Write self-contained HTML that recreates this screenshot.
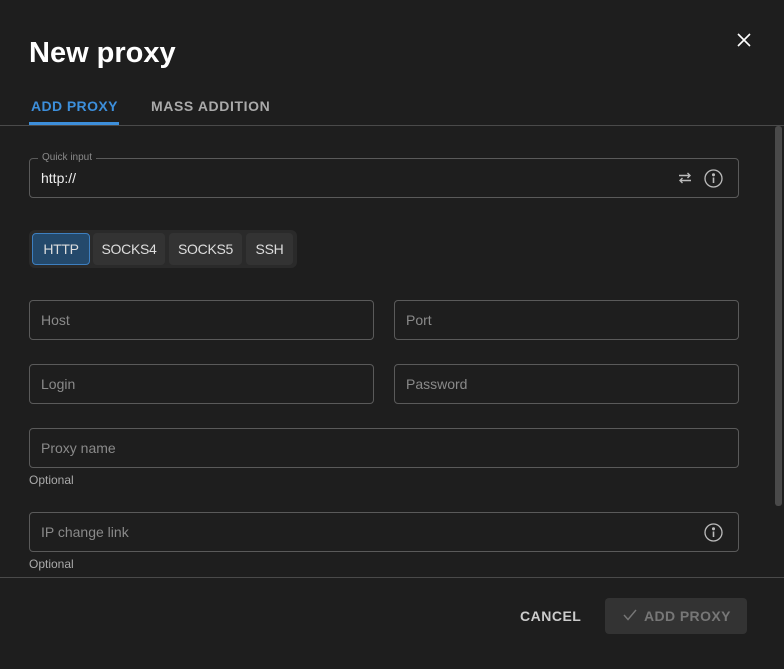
<!DOCTYPE html><html><head><style>
body{margin:0;width:784px;height:669px;background:#1e1e1e;font-family:"Liberation Sans",sans-serif;position:relative;overflow:hidden;color:#ddd}
.a{position:absolute}
.f{position:absolute;border:1px solid #5a5a5a;border-radius:4px;box-sizing:border-box;height:40px}
.ph{position:absolute;left:11px;top:11px;font-size:14px;color:#8a8a8a}
.opt{position:absolute;font-size:12px;color:#aaa}
.b{position:absolute;top:3px;height:32px;border-radius:4px;background:#333;font-size:14px;color:#ddd;text-align:center;line-height:32px;letter-spacing:-0.3px}
</style></head><body>
<div class="a" style="left:29px;top:37px;font-size:29px;font-weight:bold;color:#fff">New proxy</div>
<svg class="a" style="left:737px;top:33px" width="14" height="14"><path d="M1 1L13 13M13 1L1 13" stroke="#fff" stroke-width="1.6"/></svg>
<div class="a" style="left:31px;top:98px;font-size:14px;font-weight:bold;letter-spacing:0.4px;color:#3d8fdb">ADD PROXY</div>
<div class="a" style="left:29px;top:122px;width:90px;height:3px;background:#3d8fdb"></div>
<div class="a" style="left:151px;top:98px;font-size:14px;font-weight:bold;letter-spacing:0.6px;color:#aaa">MASS ADDITION</div>
<div class="a" style="left:0;top:125px;width:784px;height:1px;background:#4a4a4a"></div>
<div class="a" style="left:775px;top:126px;width:7px;height:380px;background:#4a4a4a;border-radius:3px"></div>
<div class="f" style="left:29px;top:158px;width:710px"><div class="a" style="left:8px;top:-7px;padding:0 4px;background:#1e1e1e;font-size:10px;color:#8a8a8a">Quick input</div><div class="ph" style="color:#eee">http://</div>
<svg class="a" style="left:648px;top:12px" width="14" height="14" fill="none" stroke="#bbb" stroke-width="1.4"><path d="M1 4.5H12M9.5 2L12 4.5L9.5 7M13 9.5H2M4.5 7L2 9.5L4.5 12"/></svg>
<svg class="a" style="left:674px;top:10px" width="19" height="19" fill="none" stroke="#bbb" stroke-width="1.3"><circle cx="9.5" cy="9.5" r="8.5"/><path d="M9.5 8.5V14" stroke-width="1.6"/><circle cx="9.5" cy="5.8" r=".9" fill="#bbb"/></svg></div>
<div class="a" style="left:29px;top:230px;width:268px;height:38px;background:#2a2a2a;border-radius:6px">
<div class="b" style="left:3px;width:58px;background:#24496b;border:1px solid #3d7fc0;box-sizing:border-box;line-height:30px">HTTP</div>
<div class="b" style="left:64px;width:72px">SOCKS4</div>
<div class="b" style="left:140px;width:73px">SOCKS5</div>
<div class="b" style="left:217px;width:47px">SSH</div></div>
<div class="f" style="left:29px;top:300px;width:345px"><div class="ph">Host</div></div>
<div class="f" style="left:394px;top:300px;width:345px"><div class="ph">Port</div></div>
<div class="f" style="left:29px;top:364px;width:345px"><div class="ph">Login</div></div>
<div class="f" style="left:394px;top:364px;width:345px"><div class="ph">Password</div></div>
<div class="f" style="left:29px;top:428px;width:710px"><div class="ph">Proxy name</div></div>
<div class="opt" style="left:29px;top:473px">Optional</div>
<div class="f" style="left:29px;top:512px;width:710px"><div class="ph">IP change link</div>
<svg class="a" style="left:674px;top:10px" width="19" height="19" fill="none" stroke="#bbb" stroke-width="1.3"><circle cx="9.5" cy="9.5" r="8.5"/><path d="M9.5 8.5V14" stroke-width="1.6"/><circle cx="9.5" cy="5.8" r=".9" fill="#bbb"/></svg></div>
<div class="opt" style="left:29px;top:557px">Optional</div>
<div class="a" style="left:0;top:577px;width:784px;height:1px;background:#4a4a4a"></div>
<div class="a" style="left:520px;top:608px;font-size:14px;font-weight:bold;letter-spacing:0.5px;color:#ccc">CANCEL</div>
<div class="a" style="left:605px;top:598px;width:142px;height:36px;background:#333;border-radius:4px"></div>
<svg class="a" style="left:623px;top:609px" width="14" height="12" fill="none" stroke="#777" stroke-width="1.4"><path d="M1 6L5 10.5L13 1"/></svg>
<div class="a" style="left:644px;top:608px;font-size:14px;font-weight:bold;letter-spacing:0.4px;color:#777">ADD PROXY</div>
</body></html>
